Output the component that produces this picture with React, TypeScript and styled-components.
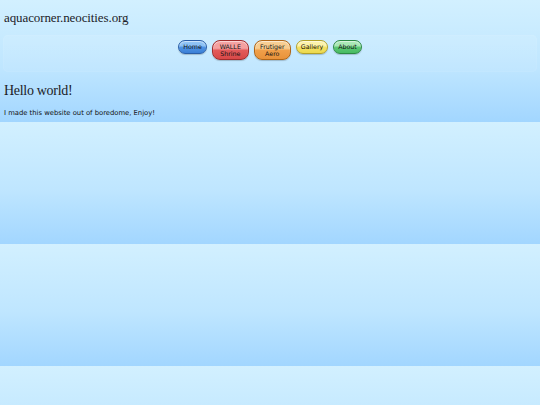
import React from 'react';
import styled, { createGlobalStyle } from 'styled-components';

const GlobalStyle = createGlobalStyle`
  html {
    background: linear-gradient(180deg, #d2f0ff 0%, #bfe6ff 55%, #a2d6ff 100%);
    background-size: 100% 122px;
    background-repeat: repeat;
    min-height: 100%;
  }
  body {
    margin: 0;
    padding: 0 3px;
    font-family: "DejaVu Sans", Verdana, sans-serif;
    color: #222;
  }
`;

const SiteTitle = styled.h1`
  font-family: "Liberation Serif", "DejaVu Serif", serif;
  font-weight: normal;
  font-size: 13px;
  letter-spacing: -0.1px;
  color: #1c1c28;
  margin: 0;
  padding: 9px 1px 0;
  line-height: 18px;
`;

const NavBar = styled.nav`
  margin-top: 8px;
  height: 37px;
  box-sizing: border-box;
  padding-top: 5px;
  display: flex;
  justify-content: center;
  align-items: flex-start;
  gap: 5px;
  border-radius: 5px;
  background: linear-gradient(180deg, rgba(255, 255, 255, 0.1), rgba(255, 255, 255, 0.04));
  box-shadow: inset 0 0 2px rgba(255, 255, 255, 0.2);
`;

const palette = {
  blue: { top: '#8cc2f5', mid: '#4f94e4', bottom: '#3b7fd6', border: '#2a5fa8' },
  red: { top: '#f4a0a0', mid: '#e35a5a', bottom: '#d84848', border: '#a02c2c' },
  orange: { top: '#f8cd90', mid: '#f0a04a', bottom: '#e8923a', border: '#b06618' },
  yellow: { top: '#fdf3a8', mid: '#f4e264', bottom: '#ecd94e', border: '#b3a22a' },
  green: { top: '#a8e8b4', mid: '#5cc874', bottom: '#48bb62', border: '#2c8a44' },
};

type Tone = keyof typeof palette;

const NavButton = styled.a<{ $tone: Tone }>`
  display: flex;
  align-items: center;
  justify-content: center;
  text-align: center;
  box-sizing: border-box;
  min-width: 28px;
  padding: 2px 4px;
  min-height: 13px;
  font-family: "DejaVu Sans", Verdana, sans-serif;
  font-size: 6.3px;
  line-height: 7.5px;
  color: #111;
  text-decoration: none;
  border-radius: 7px;
  border: 1px solid ${p => palette[p.$tone].border};
  background: linear-gradient(
    180deg,
    ${p => palette[p.$tone].top} 0%,
    ${p => palette[p.$tone].top} 40%,
    ${p => palette[p.$tone].mid} 52%,
    ${p => palette[p.$tone].bottom} 100%
  );
  box-shadow: inset 0 1px 1px rgba(255, 255, 255, 0.6), 0 1px 1px rgba(0, 0, 0, 0.2);
`;

const TallButton = styled(NavButton)`
  width: 37px;
  height: 20px;
  border-radius: 8px;
`;

const Main = styled.main`
  padding: 0 1px;
`;

const Heading = styled.h2`
  font-family: "Liberation Serif", "DejaVu Serif", serif;
  font-weight: normal;
  font-size: 14px;
  letter-spacing: -0.3px;
  line-height: 20px;
  color: #1c1c28;
  margin: 9px 0 0;
`;

const Text = styled.p`
  font-size: 6.8px;
  line-height: 9px;
  margin: 8px 0 0;
  color: #111;
`;

export default function App() {
  return (
    <>
      <GlobalStyle />
      <SiteTitle>aquacorner.neocities.org</SiteTitle>
      <NavBar>
        <NavButton $tone="blue" href="#">Home</NavButton>
        <TallButton $tone="red" href="#">WALLE<br />Shrine</TallButton>
        <TallButton $tone="orange" href="#">Frutiger<br />Aero</TallButton>
        <NavButton $tone="yellow" href="#">Gallery</NavButton>
        <NavButton $tone="green" href="#">About</NavButton>
      </NavBar>
      <Main>
        <Heading>Hello world!</Heading>
        <Text>I made this website out of boredome, Enjoy!</Text>
      </Main>
    </>
  );
}
